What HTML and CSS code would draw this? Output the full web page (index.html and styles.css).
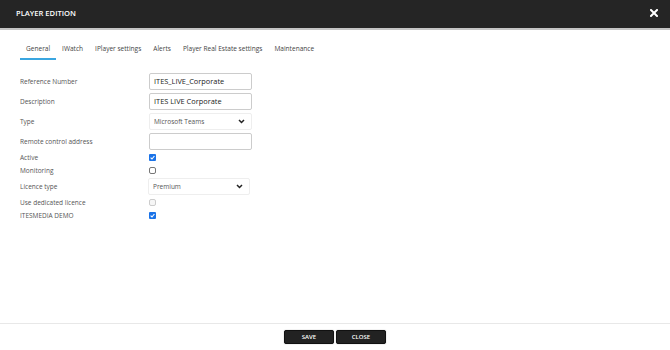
FILE: index.html
```html
<!DOCTYPE html>
<html lang="en">
<head>
  <meta charset="UTF-8">
  <title>Player Edition</title>
  <link rel="stylesheet" href="styles.css">
</head>
<body>
  <!-- Barra del titolo -->
  <div class="header">
    <span class="title">PLAYER EDITION</span>
    <svg class="close-icon" width="8" height="8" viewBox="0 0 8 8">
      <path d="M1 1 L7 7 M7 1 L1 7" stroke="#fff" stroke-width="2" stroke-linecap="square"/>
    </svg>
  </div>

  <div class="main">
    <!-- Schede -->
    <div class="tabs">
      <span class="tab active">General</span>
      <span class="tab">IWatch</span>
      <span class="tab">IPlayer settings</span>
      <span class="tab">Alerts</span>
      <span class="tab">Player Real Estate settings</span>
      <span class="tab">Maintenance</span>
    </div>

    <!-- Modulo -->
    <div class="form">
      <div class="row field">
        <label>Reference Number</label>
        <div class="input">ITES_LIVE_Corporate</div>
      </div>
      <div class="row field">
        <label>Description</label>
        <div class="input">ITES LIVE Corporate</div>
      </div>
      <div class="row field">
        <label>Type</label>
        <div class="select">Microsoft Teams
          <svg width="7" height="5" viewBox="0 0 7 5"><path d="M1 1 L3.5 3.5 L6 1" fill="none" stroke="#222" stroke-width="1.5"/></svg>
        </div>
      </div>
      <div class="row field">
        <label>Remote control address</label>
        <div class="input"></div>
      </div>
      <div class="row check">
        <label>Active</label>
        <span class="box checked"><svg width="7" height="7" viewBox="0 0 7 7"><path d="M1.6 3.6 L3 5 L5.4 2" fill="none" stroke="#fff" stroke-width="1.1"/></svg></span>
      </div>
      <div class="row check">
        <label>Monitoring</label>
        <span class="box"></span>
      </div>
      <div class="row licence">
        <label>Licence type</label>
        <div class="select short">Premium
          <svg width="7" height="5" viewBox="0 0 7 5"><path d="M1 1 L3.5 3.5 L6 1" fill="none" stroke="#222" stroke-width="1.5"/></svg>
        </div>
      </div>
      <div class="row check">
        <label>Use dedicated licence</label>
        <span class="box disabled"></span>
      </div>
      <div class="row check">
        <label>ITESMEDIA DEMO</label>
        <span class="box checked"><svg width="7" height="7" viewBox="0 0 7 7"><path d="M1.6 3.6 L3 5 L5.4 2" fill="none" stroke="#fff" stroke-width="1.1"/></svg></span>
      </div>
    </div>
  </div>

  <!-- Pulsanti in basso -->
  <div class="footer">
    <button class="btn">SAVE</button>
    <button class="btn">CLOSE</button>
  </div>
</body>
</html>
```
FILE: styles.css
```css
/* Stili globali */
* { margin: 0; padding: 0; box-sizing: border-box; }
html, body { height: 100%; }
body {
  font-family: "Open Sans", sans-serif;
  background: #fff;
  color: #555;
  display: flex;
  flex-direction: column;
}

/* Barra del titolo */
.header {
  height: 30px;
  background: #252525;
  border-bottom: 2px solid #c4c4c4;
  display: flex;
  align-items: center;
  justify-content: space-between;
  padding: 0 12px 2px 16px;
}
.title {
  color: #fff;
  font-size: 7.6px;
  font-weight: 600;
}

.main { flex: 1; }

/* Schede */
.tabs {
  display: flex;
  padding: 0 20px;
  margin-top: 10px;
}
.tab {
  font-size: 6.55px;
  line-height: 18px;
  padding: 0 6px;
  color: #444;
  border-bottom: 2px solid transparent;
}
.tab.active {
  border-bottom-color: #3aa6e0;
}

/* Modulo */
.form {
  margin-top: 11px;
  padding: 0 20px;
}
.row {
  display: grid;
  grid-template-columns: 129px 103px;
  align-items: center;
}
.row label {
  font-size: 6.5px;
  color: #555;
}
.field { height: 20px; }
.check { height: 13px; }
.licence { height: 19px; }

.input {
  height: 17px;
  border: 1px solid #ccc;
  border-radius: 2px;
  font-size: 7.4px;
  color: #222;
  padding: 0 4px;
  line-height: 15px;
}
.select {
  height: 17px;
  border: 1px solid #eee;
  border-radius: 2px;
  font-size: 6.5px;
  color: #555;
  padding: 0 4px;
  display: flex;
  align-items: center;
  justify-content: space-between;
}
.select svg { margin-right: 2px; }
.select.short {
  width: 102px;
  margin-left: -1px;
}

/* Caselle di spunta */
.box {
  width: 7px;
  height: 7px;
  border: 1px solid #777;
  border-radius: 2px;
  display: flex;
  background: #fff;
}
.box.checked {
  background: #1a73e8;
  border: none;
  border-radius: 1px;
}
.box.disabled {
  border-color: #ccc;
  background: #f6f6f6;
}

/* Pulsanti in basso */
.footer {
  border-top: 1px solid #e8e8e8;
  display: flex;
  justify-content: center;
  gap: 2px;
  padding: 6px 0;
}
.btn {
  width: 50px;
  height: 14px;
  background: #222;
  color: #fff;
  border: 1px solid #111;
  border-radius: 2px;
  font-family: "Open Sans", sans-serif;
  font-size: 6px;
  font-weight: 600;
  box-shadow: 0 0 1px rgba(0, 0, 0, 0.5);
}
```
